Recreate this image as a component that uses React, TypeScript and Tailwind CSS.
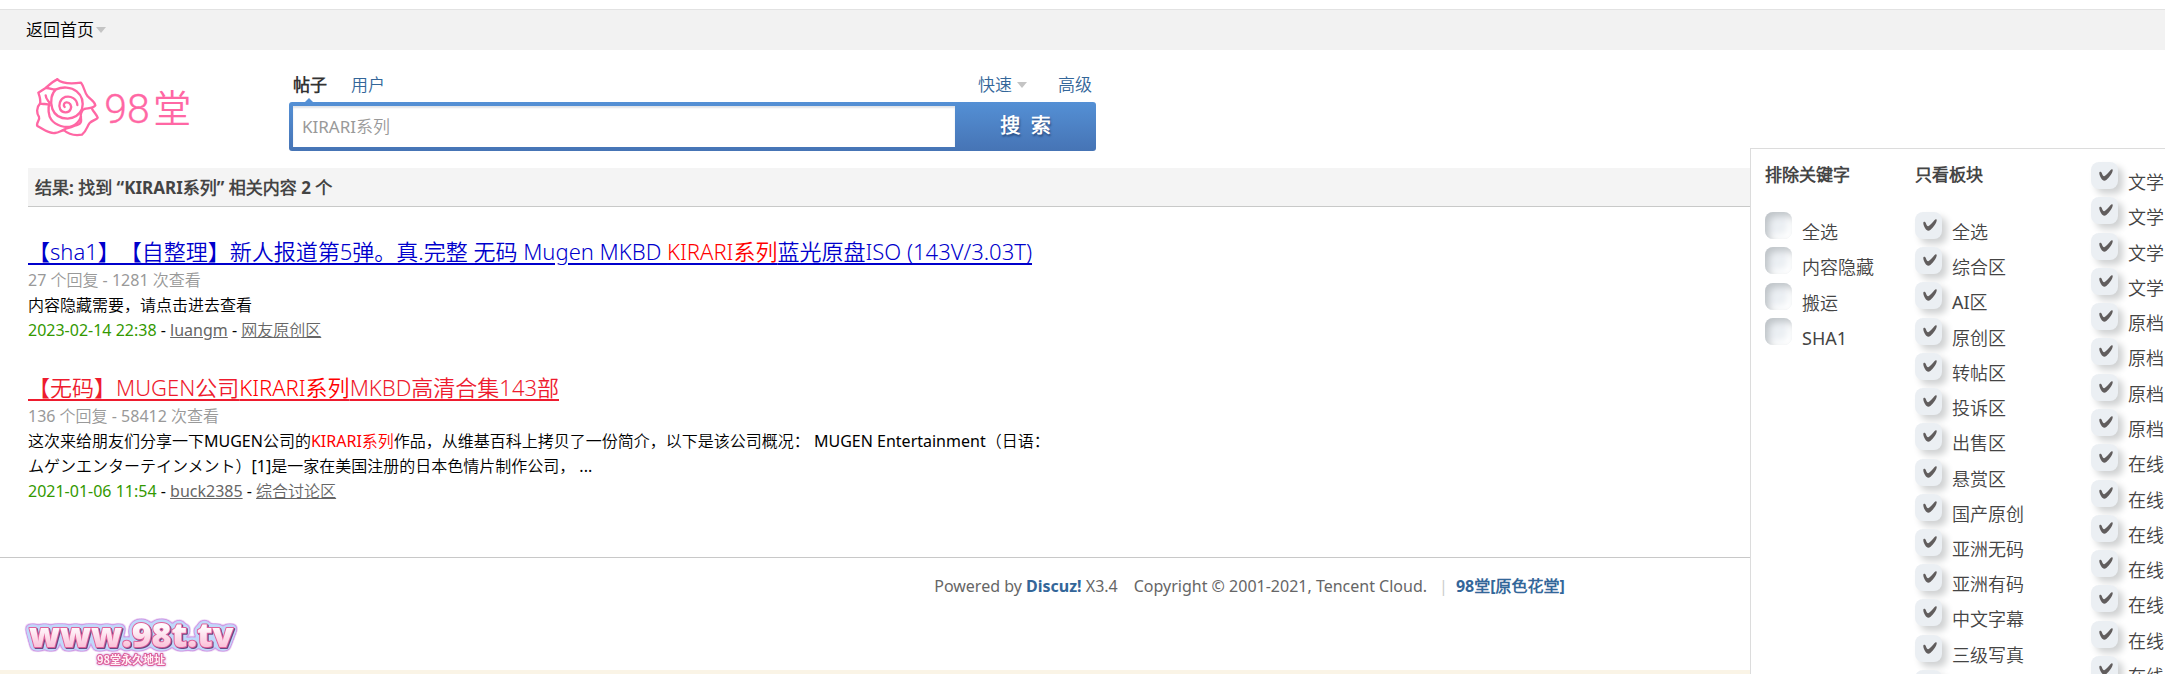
import { ReactNode } from "react"

type Option = {
    label: string
    hint?: string
}

const excluded: Option[] = [
    { label: "全选" },
    { label: "内容隐藏" },
    { label: "搬运" },
    { label: "SHA1" },
]

const boards: Option[] = [
    { label: "全选" },
    { label: "综合区" },
    { label: "AI区" },
    { label: "原创区" },
    { label: "转帖区" },
    { label: "投诉区" },
    { label: "出售区" },
    { label: "悬赏区" },
    { label: "国产原创" },
    { label: "亚洲无码" },
    { label: "亚洲有码" },
    { label: "中文字幕" },
    { label: "三级写真" },
    { label: "", hint: "更多板块" },
]

const subBoards: Option[] = [
    ...Array(4).fill({ label: "文学" }),
    ...Array(4).fill({ label: "原档" }),
    ...Array(7).fill({ label: "在线" }),
]

const Caret = () => (
    <span className="inline-block border-x-5 border-t-6 border-x-transparent border-t-[#c4c4c4]" />
)

const Logo = () => (
    <svg viewBox="0 0 480 190" className="w-40 shrink-0" role="img" aria-label="98堂">
        <g transform="translate(-40 -30)" fill="none" stroke="#ff67a4" strokeWidth="7" strokeLinejoin="round" strokeLinecap="round">
            <path d="M113 43C98 50 88 60 78 69L56 83C60 94 64 103 61 116C49 128 51 145 58 156C62 164 48 174 53 183C72 193 88 207 106 204C117 203 124 197 132 195C145 207 164 213 187 209C202 197 202 183 210 174C218 166 231 164 234 158C230 148 222 141 217 131" />
            <path d="M113 43C130 58 157 57 184 53C196 69 194 84 204 94C214 105 225 109 227 121C221 130 207 129 194 132C188 134 187 139 184 145" />
            <path d="M80 69C91 69 101 75 109 73C128 65 154 65 171 79C187 92 192 111 187 132C180 148 164 159 144 161C121 161 105 150 98 132C90 107 96 84 109 73" />
            <path d="M61 116C72 119 83 114 90 121M78 91C78 102 86 107 90 114C84 128 86 153 95 164C108 182 137 190 156 184C168 180 178 170 184 156" />
            <path d="M135 126C130 121 133 113 140 112C151 111 157 122 153 132C148 145 129 145 122 134C115 120 121 102 136 96C154 91 172 102 173 120" />
            <path d="M132 195C141 188 151 190 160 184C174 178 180 182 184 170C186 162 181 154 184 147" />
        </g>
        <text x="214" y="145" fill="#ff67a4" stroke="#ff67a4" strokeWidth="1" className="font-['Roboto',sans-serif] text-[123px] font-light">98</text>
        <text x="361" y="142" fill="#ff67a4" className="font-['Noto_Sans_CJK_SC',sans-serif] text-[114px] font-[350]">堂</text>
    </svg>
)

const SiteBadge = () => (
    <svg viewBox="0 0 220 58" className="block w-55" role="img" aria-label="www.98t.tv 98堂永久地址">
        <defs>
            <linearGradient id="candy" x1="0" y1="0" x2="0" y2="1">
                <stop offset="0.35" stopColor="#fffafd" />
                <stop offset="0.85" stopColor="#fab8d3" />
            </linearGradient>
            <filter id="halo" x="-10%" y="-30%" width="120%" height="160%" colorInterpolationFilters="sRGB">
                <feGaussianBlur in="SourceAlpha" stdDeviation="2" result="soft" />
                <feComponentTransfer in="soft" result="outer">
                    <feFuncA type="linear" slope="20" intercept="-0.2" />
                </feComponentTransfer>
                <feComponentTransfer in="soft" result="inner">
                    <feFuncA type="linear" slope="14" intercept="-1" />
                </feComponentTransfer>
                <feFlood floodColor="#d09be6" />
                <feComposite in2="outer" operator="in" result="purple" />
                <feFlood floodColor="#bfd8fa" />
                <feComposite in2="inner" operator="in" result="blue" />
                <feOffset in="SourceAlpha" dx="1" dy="1" result="moved" />
                <feFlood floodColor="#6b4580" />
                <feComposite in2="moved" operator="in" result="shade" />
                <feMerge>
                    <feMergeNode in="purple" />
                    <feMergeNode in="blue" />
                    <feMergeNode in="shade" />
                    <feMergeNode in="SourceGraphic" />
                </feMerge>
            </filter>
            <filter id="glow" x="-10%" y="-20%" width="120%" height="140%">
                <feDropShadow dx="0" dy="0" stdDeviation="1" floodColor="#c98be0" />
            </filter>
        </defs>
        <text x="9" y="37" fill="url(#candy)" stroke="#e0629b" strokeWidth="2" strokeLinejoin="round" paintOrder="stroke" filter="url(#halo)" className="font-['Open_Sans',sans-serif] text-[34px] font-extrabold">www.98t.tv</text>
        <text x="77" y="54" fill="#fff0f6" stroke="#dd5f98" strokeWidth="2" strokeLinejoin="round" paintOrder="stroke" filter="url(#glow)" className="font-['Noto_Sans_CJK_SC',sans-serif] text-[11px] font-bold">98堂永久地址</text>
    </svg>
)

const CheckRow = ({ option, checked = false }: { option: Option, checked?: boolean }) => (
    <label className="flex items-start gap-[10px] h-[27px] whitespace-nowrap">
        <span className="grid shrink-0">
            <input
                type="checkbox"
                defaultChecked={checked}
                aria-label={option.hint}
                className="peer appearance-none [grid-area:1/1] size-[27px] rounded-lg bg-[#ebeff3] shadow-[inset_4px_4px_7px_#bfc4c8,inset_-4px_-4px_7px_#ffffff] checked:shadow-[5px_5px_7px_#d0d2d3]"
            />
            <svg viewBox="0 0 27 27" className="[grid-area:1/1] size-[27px] hidden peer-checked:block pointer-events-none">
                <path d="M8.3 10.8C8.3 9.4 10.2 9.6 10.8 11C11.4 12.6 12 14.2 13.2 14.2C15 13.4 17.6 10.6 19.4 8.3C20.6 6.6 21.9 6.9 21.7 8.6C21.5 11.4 18.2 15.7 15.6 17.7C13.4 19.3 11.8 18.8 10.3 16.6C9 14.7 8.3 12.6 8.3 10.8Z" fill="#615d5d" />
            </svg>
        </span>
        <span className="pt-2 leading-6 text-lg text-[#444]">{option.label}</span>
    </label>
)

const Hit = ({ children }: { children: ReactNode }) => (
    <em className="not-italic text-[#f00]">{children}</em>
)

const FilterPanel = () => (
    <aside className="absolute right-0 top-[148px] bottom-0 w-[415px] overflow-hidden bg-white border-t border-l border-[#dcdcdc] flex pl-[14px]">
        <section className="w-[150px] shrink-0 pt-[14px]">
            <h2 className="text-[17px] leading-6 font-bold text-[#444]">排除关键字</h2>
            <div className="mt-[25px] h-[133px] flex flex-col justify-between">
                {excluded.map((option) => <CheckRow key={option.label} option={option} />)}
            </div>
        </section>

        <section className="w-[176px] shrink-0 pt-[14px]">
            <h2 className="text-[17px] leading-6 font-bold text-[#444]">只看板块</h2>
            <div className="mt-[25px] h-[485px] flex flex-col justify-between">
                {boards.map((option) => <CheckRow key={option.label} option={option} checked />)}
            </div>
        </section>

        <section className="shrink-0 pt-[13px]">
            <div className="h-[521px] flex flex-col justify-between">
                {subBoards.map((option, i) => <CheckRow key={i} option={option} checked />)}
            </div>
        </section>
    </aside>
)

const SearchForm = () => (
    <form className="w-[807px] text-[17px]" onSubmit={(e) => e.preventDefault()}>
        <div className="flex items-center h-[34px] px-1 text-[#369]">
            <a href="#" className="relative w-[58px] font-bold text-[#333]">
                帖子
                <span className="absolute left-[11px] -bottom-[5px] border-x-5 border-b-5 border-x-transparent border-b-[#5490d5]" />
            </a>
            <a href="#">用户</a>
            <a href="#" className="ml-auto flex items-center gap-[5px]">快速 <Caret /></a>
            <a href="#" className="ml-[31px]">高级</a>
        </div>

        <div className="flex h-[49px] p-1 pr-0 rounded-[3px] bg-linear-to-b from-[#5490d5] to-[#4674b5]">
            <input
                type="text"
                aria-label="搜索"
                defaultValue="KIRARI系列"
                className="flex-1 min-w-0 px-[9px] bg-white text-[#999] outline-none shadow-[inset_0_2px_2px_#e0e3e8]"
            />
            <button type="submit" className="w-[141px] pb-px text-xl font-bold text-white text-shadow-[1px_2px_2px_#2b4f85]">
                搜&nbsp; 索
            </button>
        </div>
    </form>
)

const Result = ({ title, color, stats, date, author, board, children }: {
    title: ReactNode
    color: string
    stats: string
    date: string
    author: string
    board: string
    children: ReactNode
}) => (
    <li className="leading-[25px]">
        <h3 className="text-[22px] leading-[33px] font-[350] [text-spacing-trim:space-all]">
            <a href="#" className={`underline decoration-2 underline-offset-3 ${color}`}>{title}</a>
        </h3>
        <p className="text-[#999]">{stats}</p>
        <p>{children}</p>
        <p>
            <span className="text-[#390]">{date}</span> - <a href="#" className="underline text-[#666]">{author}</a> - <a href="#" className="underline text-[#666]">{board}</a>
        </p>
    </li>
)

export default function App() {
    return (
        <div className="relative min-h-screen overflow-hidden flex flex-col bg-white text-black text-base font-['Noto_Sans','Noto_Sans_CJK_SC_DemiLight','Noto_Sans_CJK_SC',sans-serif]">

            <nav className="mt-[9px] h-[41px] shrink-0 flex items-center px-[26px] bg-[#f2f2f2] border-t border-[#e2e2e2] text-[17px]">
                <a href="#" className="flex items-center gap-[2px]">返回首页<Caret /></a>
            </nav>

            <header className="flex items-start gap-24 pt-[18px] pl-[33px]">
                <div className="pt-[7px]">
                    <Logo />
                </div>
                <SearchForm />
            </header>

            <main className="pl-7 pt-[17px]">
                <h2 className="h-[39px] pl-[7px] pt-px flex items-center bg-[#f4f4f4] border-b border-[#c8c9c8] text-[17px] font-bold text-[#444]">
                    结果: 找到 “KIRARI系列” 相关内容 2 个
                </h2>

                <ul className="pt-7 pb-[53px] flex flex-col gap-7">
                    <Result
                        title={<>【sha1】【自整理】新人报道第5弹。真.完整 无码 Mugen MKBD <Hit>KIRARI系列</Hit>蓝光原盘ISO (143V/3.03T)</>}
                        color="text-[#0000cc]"
                        stats="27 个回复 - 1281 次查看"
                        date="2023-02-14 22:38"
                        author="luangm"
                        board="网友原创区"
                    >
                        内容隐藏需要，请点击进去查看
                    </Result>
                    <Result
                        title={<>【无码】MUGEN公司<Hit>KIRARI系列</Hit>MKBD高清合集143部</>}
                        color="text-[#ee1b2e]"
                        stats="136 个回复 - 58412 次查看"
                        date="2021-01-06 11:54"
                        author="buck2385"
                        board="综合讨论区"
                    >
                        这次来给朋友们分享一下MUGEN公司的<Hit>KIRARI系列</Hit>作品，从维基百科上拷贝了一份简介，以下是该公司概况： MUGEN Entertainment（日语：<br />
                        ムゲンエンターテインメント）[1]是一家在美国注册的日本色情片制作公司， ...
                    </Result>
                </ul>
            </main>

            <footer className="flex-1 flex flex-col border-t border-[#c8c8c8]">
                <p className="pt-4 pl-[334px] text-center leading-6 text-[#666]">
                    Powered by <a href="#" className="font-bold text-[#369]">Discuz!</a> X3.4
                    <span className="ml-4">Copyright © 2001-2021, Tencent Cloud.</span>
                    <span className="mx-2 pl-1 text-[#ccc]">|</span>
                    <a href="#" className="font-bold text-[#369]">98堂[原色花堂]</a>
                </p>
                <div className="pl-5 pt-3">
                    <SiteBadge />
                </div>
                <div className="mt-auto h-1 bg-[#faf4e6]" />
            </footer>

            <FilterPanel />
        </div>
    )
}
